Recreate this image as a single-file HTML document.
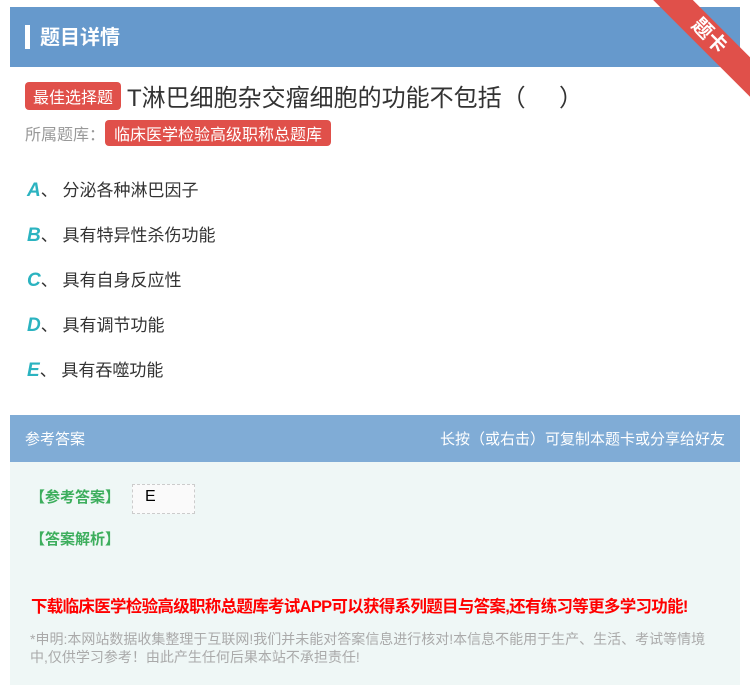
<!DOCTYPE html>
<html><head><meta charset="utf-8"><style>
*{margin:0;padding:0;box-sizing:border-box}
body{width:750px;height:685px;background:#fff;font-family:"Liberation Sans","Noto Sans CJK SC",sans-serif;position:relative;overflow:hidden}
.hd{position:absolute;left:10px;top:7px;width:730px;height:60px;background:#6699cc;}
.hd .bar{position:absolute;left:15px;top:18px;width:5px;height:24px;background:#fff}
.hd .t{position:absolute;left:30px;top:14px;color:#fff;font-size:20px;font-weight:bold}
.rib{position:absolute;right:-34px;top:22px;width:150px;height:28px;background:#e0504a;transform:rotate(45deg);color:#fff;text-align:center;font-size:20px;line-height:28px;font-weight:bold}
.tag{display:inline-block;background:#e0504a;color:#fff;border-radius:4px}
.q{position:absolute;left:25px;top:78px;font-size:24px;color:#333;white-space:nowrap}
.q .tag{font-size:16px;padding:2px 8px;vertical-align:3px;margin-right:6px}
.lib{position:absolute;left:25px;top:120px;font-size:16px;color:#999}
.lib .tag{font-size:16px;padding:1px 9px}
.opt{position:absolute;left:27px;font-size:17px;color:#333}
.opt b{color:#2bb3c0;font-style:italic;font-size:19px;margin-right:0}
.ah{position:absolute;left:10px;top:415px;width:730px;height:47px;background:#80acd6;color:#fff;font-size:15px}
.ah .l{position:absolute;left:15px;top:13px}.ah .r{position:absolute;right:15px;top:13px}
.ab{position:absolute;left:10px;top:462px;width:730px;height:223px;background:#eff7f6}
.g{position:absolute;color:#3dae5d;font-size:15px;font-weight:bold}
.red{position:absolute;left:21px;top:131px;color:#f00;font-size:16.5px;font-weight:bold;letter-spacing:-0.7px;white-space:nowrap}
.note{position:absolute;left:20px;top:168px;width:680px;color:#aaa;font-size:14px;line-height:18px}
</style></head><body>
<div class="hd"><div class="bar"></div><div class="t">题目详情</div></div>
<div class="rib">题卡</div>
<div class="q"><span class="tag">最佳选择题</span>T淋巴细胞杂交瘤细胞的功能不包括（&nbsp;&nbsp;&nbsp;&nbsp;&nbsp;）</div>
<div class="lib">所属题库：<span class="tag">临床医学检验高级职称总题库</span></div>
<div class="opt" style="top:176px"><b>A</b>、 分泌各种淋巴因子</div>
<div class="opt" style="top:221px"><b>B</b>、 具有特异性杀伤功能</div>
<div class="opt" style="top:266px"><b>C</b>、 具有自身反应性</div>
<div class="opt" style="top:311px"><b>D</b>、 具有调节功能</div>
<div class="opt" style="top:356px"><b>E</b>、 具有吞噬功能</div>
<div class="ah"><span class="l">参考答案</span><span class="r">长按（或右击）可复制本题卡或分享给好友</span></div>
<div class="ab">
<div class="g" style="left:20px;top:24px">【参考答案】</div>
<div style="position:absolute;left:122px;top:22px;width:63px;height:30px;background:#fafafa;border:1px dashed #ccc;font-size:16px;padding:3px 12px">E</div>
<div class="g" style="left:20px;top:66px">【答案解析】</div>
<div class="red">下载临床医学检验高级职称总题库考试APP可以获得系列题目与答案,还有练习等更多学习功能!</div>
<div class="note">*申明:本网站数据收集整理于互联网!我们并未能对答案信息进行核对!本信息不能用于生产、生活、考试等情境中,仅供学习参考！由此产生任何后果本站不承担责任!</div>
</div>
</body></html>
